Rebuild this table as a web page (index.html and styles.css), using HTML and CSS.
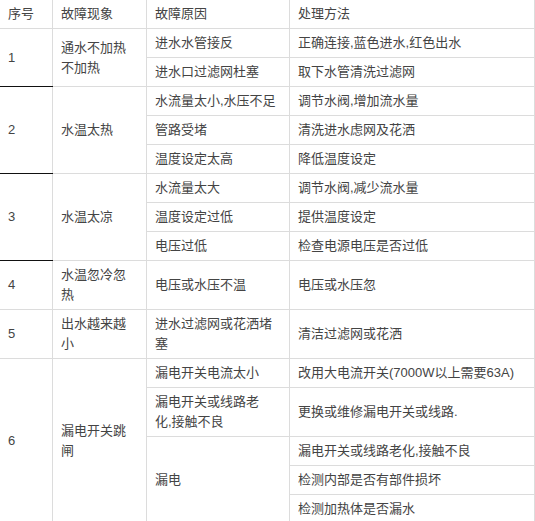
FILE: index.html
```html
<!DOCTYPE html>
<html lang="zh-CN">
<head>
<meta charset="utf-8">
<title>故障表</title>
<link rel="stylesheet" href="styles.css">
</head>
<body>
<table class="fault-table">
  <colgroup>
    <col class="c-no">
    <col class="c-sym">
    <col class="c-cause">
    <col class="c-fix">
  </colgroup>
  <thead>
    <tr><th>序号</th><th>故障现象</th><th>故障原因</th><th>处理方法</th></tr>
  </thead>
  <tbody>
    <tr>
      <td rowspan="2" class="sep">1</td>
      <td rowspan="2">通水不加热不加热</td>
      <td>进水水管接反</td>
      <td>正确连接,蓝色进水,红色出水</td>
    </tr>
    <tr>
      <td>进水口过滤网杜塞</td>
      <td>取下水管清洗过滤网</td>
    </tr>
    <tr>
      <td rowspan="3" class="sep">2</td>
      <td rowspan="3">水温太热</td>
      <td>水流量太小,水压不足</td>
      <td>调节水阀,增加流水量</td>
    </tr>
    <tr>
      <td>管路受堵</td>
      <td>清洗进水虑网及花洒</td>
    </tr>
    <tr>
      <td>温度设定太高</td>
      <td>降低温度设定</td>
    </tr>
    <tr>
      <td rowspan="3" class="sep">3</td>
      <td rowspan="3">水温太凉</td>
      <td>水流量太大</td>
      <td>调节水阀,减少流水量</td>
    </tr>
    <tr>
      <td>温度设定过低</td>
      <td>提供温度设定</td>
    </tr>
    <tr>
      <td>电压过低</td>
      <td>检查电源电压是否过低</td>
    </tr>
    <tr>
      <td>4</td>
      <td>水温忽冷忽热</td>
      <td>电压或水压不温</td>
      <td>电压或水压忽</td>
    </tr>
    <tr>
      <td>5</td>
      <td>出水越来越小</td>
      <td>进水过滤网或花洒堵塞</td>
      <td>清洁过滤网或花洒</td>
    </tr>
    <tr>
      <td rowspan="5">6</td>
      <td rowspan="5">漏电开关跳闸</td>
      <td>漏电开关电流太小</td>
      <td>改用大电流开关(7000W以上需要63A)</td>
    </tr>
    <tr>
      <td>漏电开关或线路老<br>化,接触不良</td>
      <td>更换或维修漏电开关或线路.</td>
    </tr>
    <tr>
      <td rowspan="3">漏电</td>
      <td>漏电开关或线路老化,接触不良</td>
    </tr>
    <tr>
      <td>检测内部是否有部件损坏</td>
    </tr>
    <tr>
      <td>检测加热体是否漏水</td>
    </tr>
  </tbody>
</table>
</body>
</html>
```

FILE: styles.css
```css
html, body {
  margin: 0;
  padding: 0;
  background: #fff;
  overflow: hidden;
}

body {
  font-family: "Liberation Sans", "Noto Sans CJK SC", sans-serif;
  font-size: 13px;
  color: #444;
}

.fault-table {
  border-collapse: collapse;
  table-layout: fixed;
  width: 535px;
  margin: -1px 0 0 -1px;
}

.c-no { width: 53px; }
.c-sym { width: 94px; }
.c-cause { width: 143px; }
.c-fix { width: 245px; }

.fault-table th,
.fault-table td {
  border: 1px solid #dcdcdc;
  padding: 4px 12px 4px 8px;
  line-height: 20px;
  text-align: left;
  vertical-align: middle;
  font-weight: normal;
}

.fault-table td.sep {
  border-bottom-color: #111;
}
```
